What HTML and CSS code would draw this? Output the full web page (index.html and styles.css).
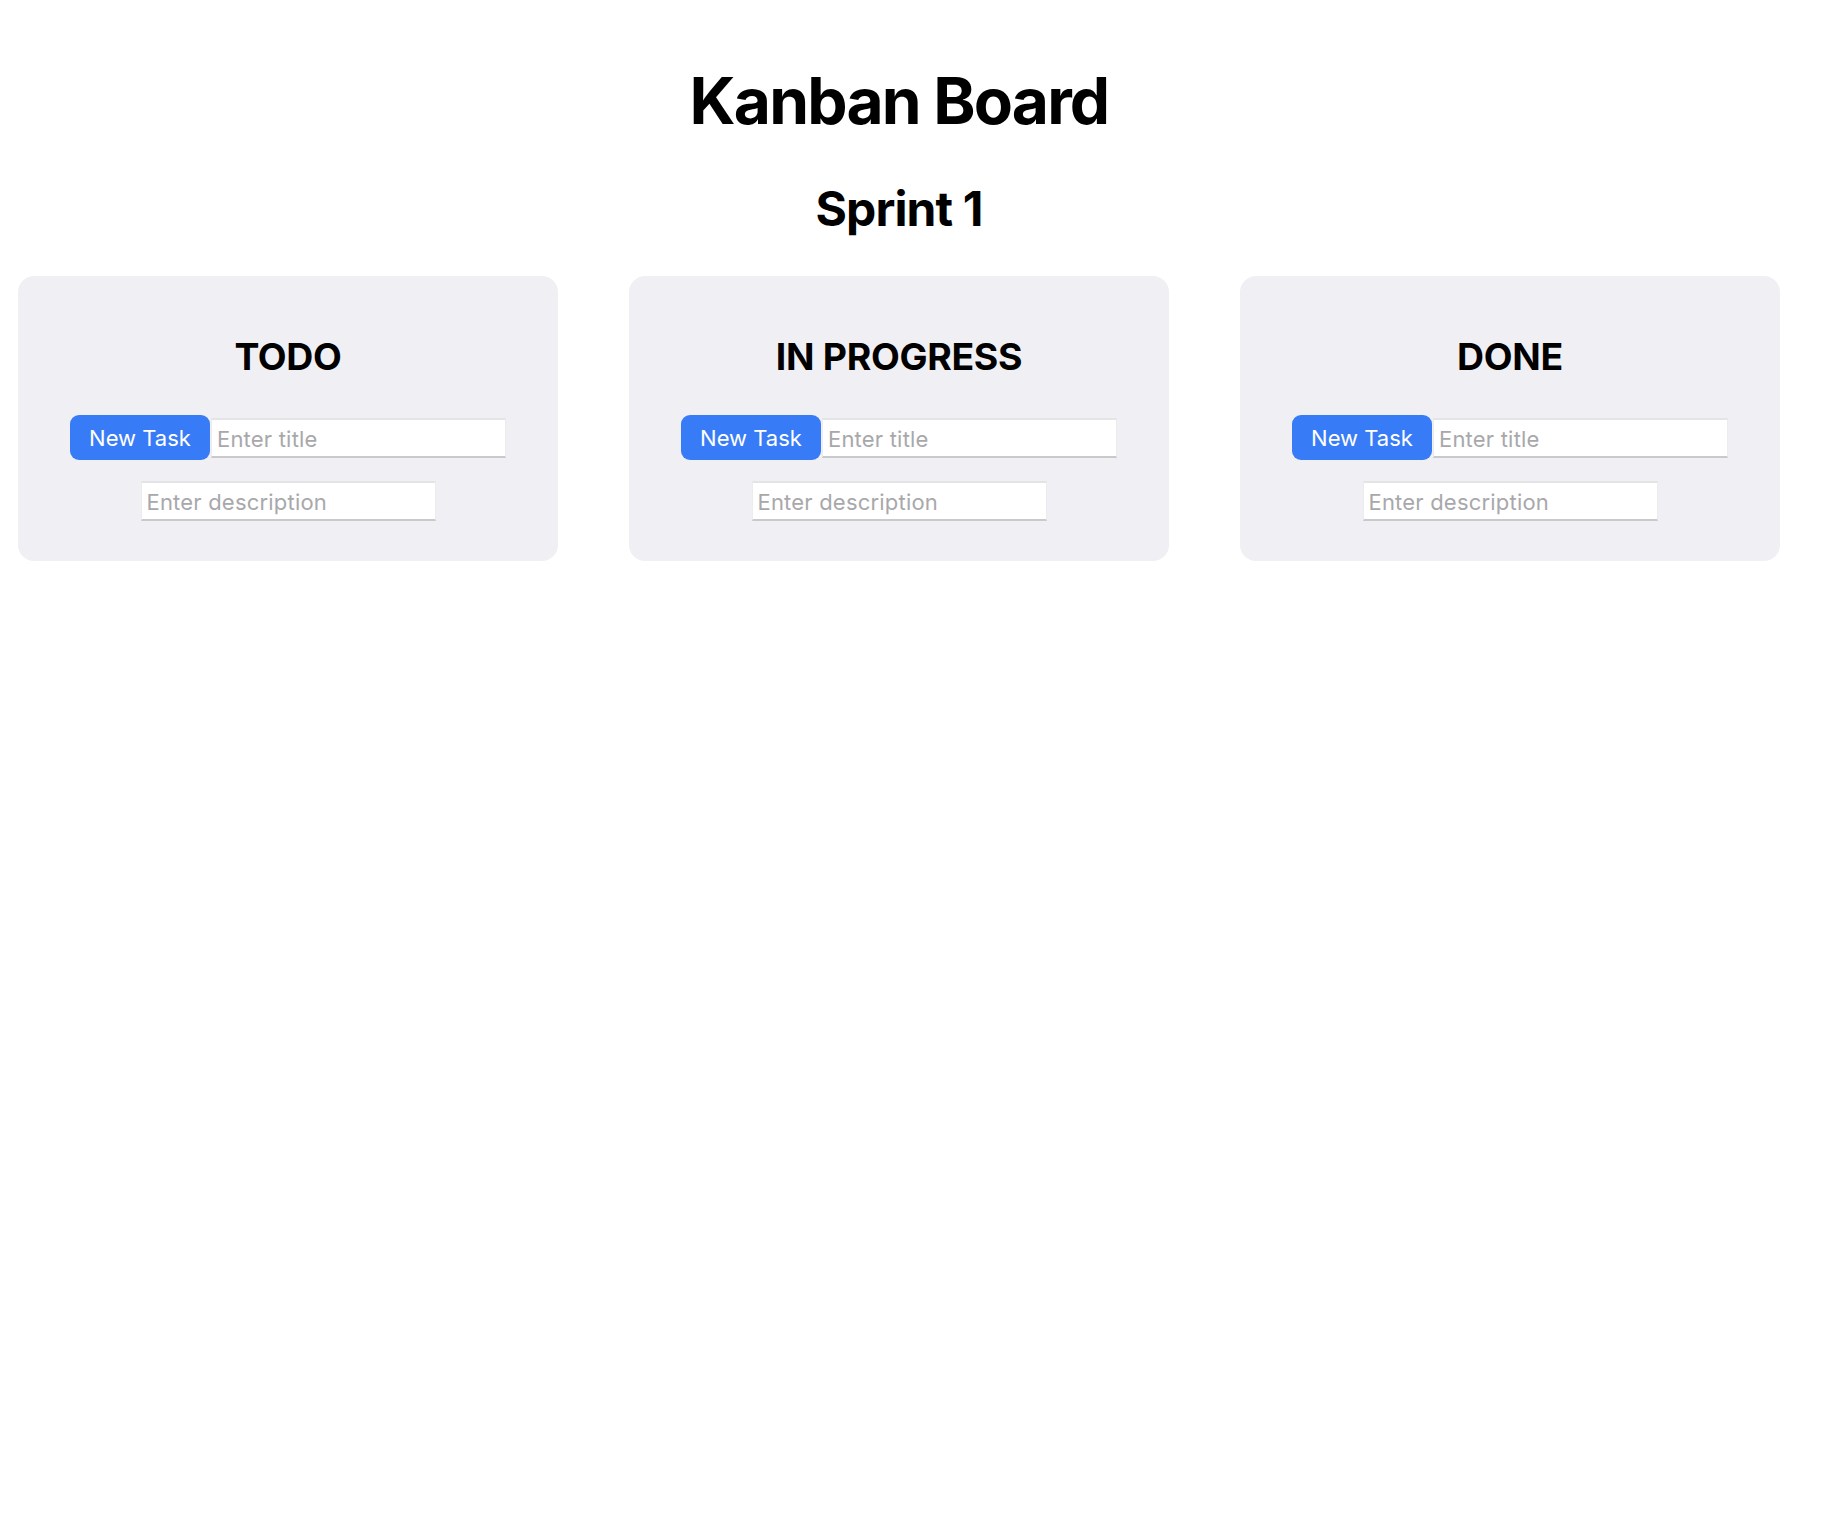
FILE: index.html
```html
<!DOCTYPE html>
<html lang="en">
<head>
<meta charset="utf-8">
<title>Kanban Board</title>
<link rel="stylesheet" href="styles.css">
</head>
<body>
<div class="page">
  <h1 class="title">Kanban Board</h1>
  <h2 class="sprint">Sprint 1</h2>
  <div class="board">
    <section class="column">
      <h3 class="column-title">TODO</h3>
      <div class="new-row">
        <button class="new-btn" type="button">New Task</button>
        <input class="field" type="text" placeholder="Enter title">
      </div>
      <input class="field desc" type="text" placeholder="Enter description">
    </section>
    <section class="column">
      <h3 class="column-title">IN PROGRESS</h3>
      <div class="new-row">
        <button class="new-btn" type="button">New Task</button>
        <input class="field" type="text" placeholder="Enter title">
      </div>
      <input class="field desc" type="text" placeholder="Enter description">
    </section>
    <section class="column">
      <h3 class="column-title">DONE</h3>
      <div class="new-row">
        <button class="new-btn" type="button">New Task</button>
        <input class="field" type="text" placeholder="Enter title">
      </div>
      <input class="field desc" type="text" placeholder="Enter description">
    </section>
  </div>
</div>
</body>
</html>
```

FILE: styles.css
```css
* { box-sizing: border-box; }

html, body {
  margin: 0;
  padding: 0;
  background: #ffffff;
}

body {
  font-family: Inter, "Noto Sans", "Liberation Sans", sans-serif;
  color: #000000;
}

.page {
  padding: 0 52px 0 18px;
}

.title {
  margin: 62px 0 40px;
  font-size: 64px;
  line-height: 78px;
  font-weight: 700;
  letter-spacing: -1.8px;
  text-align: center;
}

.sprint {
  margin: 0 0 38px;
  font-size: 48px;
  line-height: 58px;
  font-weight: 700;
  letter-spacing: -0.9px;
  text-align: center;
}

.board {
  display: flex;
  gap: 71px;
  align-items: flex-start;
}

.column {
  width: 540px;
  flex: 0 0 540px;
  background: #f0f0f4;
  border-radius: 16px;
  padding: 20px 20px 40px;
  display: flex;
  flex-direction: column;
  align-items: center;
}

.column-title {
  margin: 38px 0 36px;
  font-size: 37.4px;
  line-height: 45px;
  font-weight: 700;
  letter-spacing: -0.3px;
  text-align: center;
}

.new-row {
  display: flex;
  align-items: center;
  justify-content: center;
}

.new-btn {
  width: 140px;
  height: 45px;
  padding: 0;
  border: none;
  border-radius: 9px;
  background: #387bf6;
  color: #ffffff;
  font-family: Inter, "Noto Sans", "Liberation Sans", sans-serif;
  font-size: 22px;
  font-weight: 400;
}

.field {
  width: 295px;
  height: 40px;
  margin: 0 0 0 1px;
  padding: 2px 5px 0;
  background: #ffffff;
  border-style: solid;
  border-width: 2px 1px 2px 1px;
  border-color: #e4e4e7 #ececef #c9c9cc #ececef;
  border-radius: 0;
  font-family: Inter, "Noto Sans", "Liberation Sans", sans-serif;
  font-size: 22px;
  color: #000000;
  outline: none;
}

.field::placeholder {
  color: #a8a8ab;
  letter-spacing: 0.2px;
}

.desc {
  margin: 21px 0 0;
}
```
